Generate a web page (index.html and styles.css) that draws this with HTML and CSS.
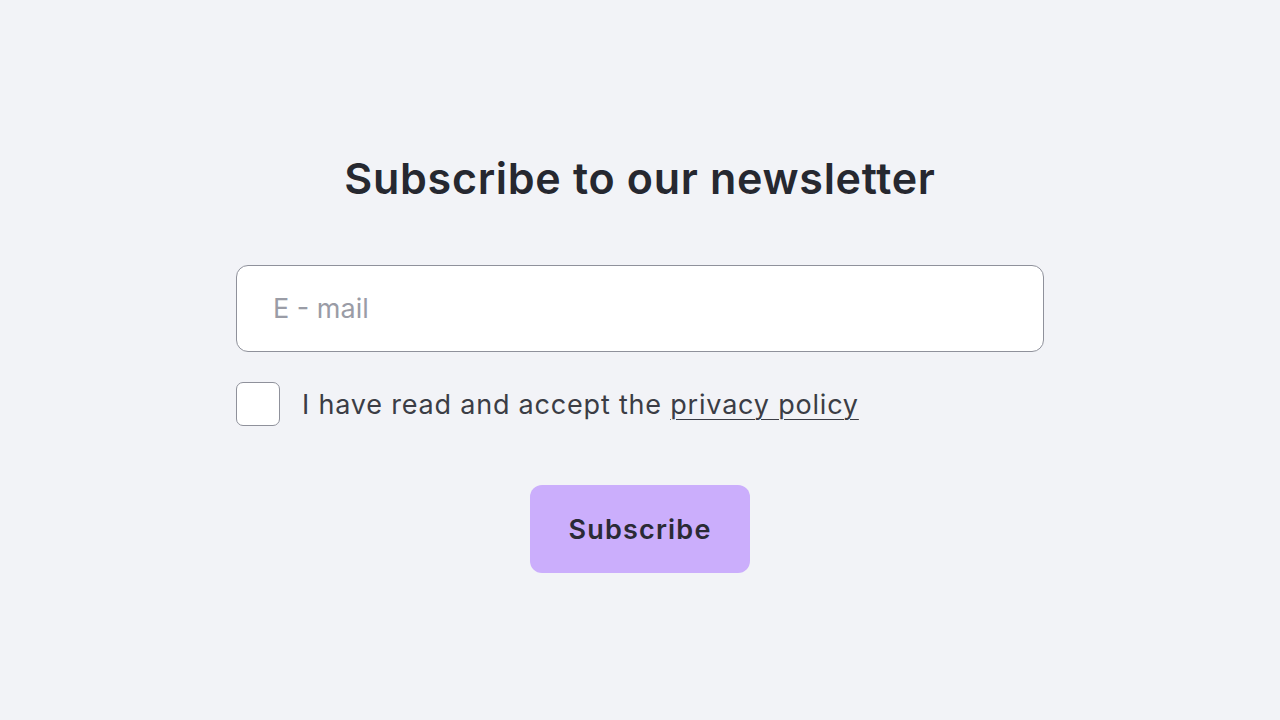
FILE: index.html
```html
<!DOCTYPE html>
<html lang="en">
<head>
<meta charset="utf-8">
<title>Newsletter</title>
<link rel="stylesheet" href="styles.css">
</head>
<body>
<main class="page">
  <form class="form">
    <h1 class="title">Subscribe to our newsletter</h1>
    <input class="email" type="email" placeholder="E - mail">
    <label class="consent">
      <span class="box"></span>
      <span class="consent-text">I have read and accept the <a class="link" href="#">privacy policy</a></span>
    </label>
    <div class="actions">
      <button class="btn" type="button">Subscribe</button>
    </div>
  </form>
</main>
</body>
</html>
```
FILE: styles.css
```css
* { box-sizing: border-box; }
html, body { margin: 0; padding: 0; }
body {
  background: #f2f3f7;
  font-family: Inter, "Noto Sans", sans-serif;
  color: #2a2c33;
}
.page {
  height: 720px;
  display: flex;
  justify-content: center;
  padding-top: 150px;
}
.form {
  width: 808px;
  display: flex;
  flex-direction: column;
}
.title {
  margin: 0;
  text-align: center;
  font-size: 43px;
  font-weight: 600;
  letter-spacing: 0.7px;
  line-height: 56px;
  color: #262830;
}
.email {
  margin-top: 59px;
  height: 87px;
  width: 100%;
  border: 1.5px solid #8f919b;
  border-radius: 12px;
  background: #fff;
  padding: 0 36px;
  font-family: inherit;
  font-size: 27px;
  color: #2a2c33;
  outline: none;
}
.email::placeholder { color: #9a9ca6; }
.consent {
  margin-top: 30px;
  display: flex;
  align-items: center;
  gap: 22px;
}
.box {
  width: 44px;
  height: 44px;
  border: 1.5px solid #8f919b;
  border-radius: 7px;
  background: #fff;
  flex: none;
}
.consent-text {
  font-size: 27px;
  color: #3b3d45;
  letter-spacing: 0.8px;
}
.link {
  color: #3b3d45;
  text-decoration: underline;
  text-decoration-thickness: 1px;
  text-underline-offset: 5px;
}
.actions {
  margin-top: 59px;
  display: flex;
  justify-content: center;
}
.btn {
  width: 220px;
  height: 88px;
  border: none;
  border-radius: 12px;
  background: #cbaefc;
  font-family: inherit;
  font-size: 27px;
  font-weight: 600;
  letter-spacing: 1.2px;
  color: #2a2a35;
  cursor: pointer;
}
```
